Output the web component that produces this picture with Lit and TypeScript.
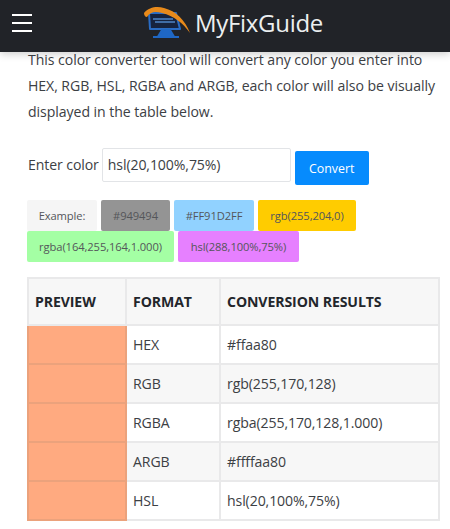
import { LitElement, html, css } from "lit";
import { customElement } from "lit/decorators.js";

const ROWS = [
  ["HEX", "#ffaa80"],
  ["RGB", "rgb(255,170,128)"],
  ["RGBA", "rgba(255,170,128,1.000)"],
  ["ARGB", "#ffffaa80"],
  ["HSL", "hsl(20,100%,75%)"],
];

@customElement("app-root")
export class AppRoot extends LitElement {
  static styles = css`
    :host {
      display: block;
      width: 450px;
      height: 529px;
      overflow: hidden;
      background: #fff;
      font-family: "Open Sans", "Noto Sans", sans-serif;
      color: #3c4044;
      font-size: 14px;
    }
    header {
      box-sizing: border-box;
      height: 52px;
      background: #212328;
      box-shadow: 0 2px 8px rgba(0, 0, 0, 0.2);
      display: flex;
      align-items: center;
      padding: 0 0 7px 12px;
      position: relative;
      z-index: 1;
    }
    .burger {
      width: 20px;
      display: flex;
      flex-direction: column;
      gap: 6px;
    }
    .burger i {
      display: block;
      height: 2px;
      background: #fff;
    }
    .brand {
      display: flex;
      align-items: center;
      margin-left: 111px;
    }
    .brand svg {
      display: block;
      margin-right: 3px;
    }
    .brand span {
      color: #eceff0;
      font-size: 24px;
      letter-spacing: -0.3px;
      line-height: 30px;
    }
    main {
      padding: 0 10px 0 27px;
    }
    p {
      margin: -5px 0 0;
      padding-left: 1px;
      line-height: 25.75px;
      width: 412px;
      font-size: 14.1px;
      letter-spacing: -0.06px;
      position: relative;
    }
    .form {
      display: flex;
      align-items: flex-start;
      margin-top: 24px;
    }
    .form label {
      line-height: 34px;
      margin: 0 3px 0 1px;
      font-size: 14.1px;
      letter-spacing: -0.1px;
    }
    .input {
      box-sizing: border-box;
      width: 189px;
      height: 34px;
      border: 1px solid #e2e4e7;
      border-radius: 2px;
      padding: 0 5px;
      line-height: 32px;
      font-size: 14.1px;
      letter-spacing: -0.1px;
      color: #3c4044;
    }
    .convert {
      box-sizing: border-box;
      width: 74px;
      height: 34px;
      margin: 3px 0 0 4px;
      background: #068bfd;
      color: #fff;
      border-radius: 2px;
      font-size: 12.4px;
      text-align: center;
      line-height: 36px;
    }
    .tags {
      display: flex;
      flex-wrap: wrap;
      column-gap: 4px;
      margin-top: 15px;
      width: 340px;
    }
    .tag {
      box-sizing: border-box;
      height: 31px;
      line-height: 31px;
      border-radius: 2px;
      text-align: center;
      font-size: 11.2px;
      letter-spacing: -0.1px;
      color: #54565a;
    }
    .table {
      border-collapse: collapse;
      table-layout: fixed;
      width: 413px;
      margin-top: 15px;
    }
    th,
    td {
      border: 2px solid #e9e9ea;
      padding: 0 0 0 6px;
      text-align: left;
      font-size: 14.1px;
      letter-spacing: -0.1px;
      height: 37px;
      font-weight: 400;
    }
    th {
      height: 45px;
      font-weight: 700;
      color: #23262b;
      background: #f7f7f7;
    }
    tr:nth-child(even) td {
      background: #f7f7f7;
    }
    td.swatch,
    tr:nth-child(even) td.swatch {
      background: #ffaa80;
      border-color: #eba27c;
    }
  `;

  render() {
    const tags: [string, string, number][] = [
      ["Example:", "#f5f5f5", 70],
      ["#949494", "#949494", 69],
      ["#FF91D2FF", "#91d2ff", 80],
      ["rgb(255,204,0)", "#ffcc00", 98],
      ["rgba(164,255,164,1.000)", "#a4ffa4", 147],
      ["hsl(288,100%,75%)", "#e680ff", 121],
    ];
    return html`
      <header>
        <div class="burger"><i></i><i></i><i></i></div>
        <div class="brand">
          <svg width="49" height="33" viewBox="0 4 49 33" aria-hidden="true">
            <path d="M6 11 H33 L37 27 H7 Z" fill="#16233f" stroke="#2a6cc4" stroke-width="2" stroke-linejoin="round"/>
            <path d="M10 17 H30 M12 20 H32" stroke="#4f86c9" stroke-width="1.3"/>
            <path d="M19 28 L16 33 H30 L27 28 Z M10 35 H36" fill="#1f67c4" stroke="#1f67c4" stroke-width="2"/>
            <path d="M1 11 C6 5 14 4 21 6 C33 9 42 18 47 31 C40 21 31 14 19 11 C12 9 7 10 4 15 C2 15 1 13 1 11 Z" fill="#e88a1b"/>
          </svg>
          <span>MyFixGuide</span>
        </div>
      </header>
      <main>
        <p>
          This color converter tool will convert any color you enter into HEX,
          RGB, HSL, RGBA and ARGB, each color will also be visually displayed in
          the table below.
        </p>
        <div class="form">
          <label>Enter color</label>
          <div class="input">hsl(20,100%,75%)</div>
          <div class="convert">Convert</div>
        </div>
        <div class="tags">
          ${tags.map(
            ([t, c, w]) =>
              html`<div class="tag" style="background:${c};width:${w}px">${t}</div>`
          )}
        </div>
        <table class="table">
          <colgroup>
            <col style="width:98px" />
            <col style="width:94px" />
            <col />
          </colgroup>
          <thead>
            <tr><th>PREVIEW</th><th>FORMAT</th><th>CONVERSION RESULTS</th></tr>
          </thead>
          <tbody>
            ${ROWS.map(
              ([a, b]) =>
                html`<tr><td class="swatch"></td><td>${a}</td><td>${b}</td></tr>`
            )}
          </tbody>
        </table>
      </main>
    `;
  }
}
